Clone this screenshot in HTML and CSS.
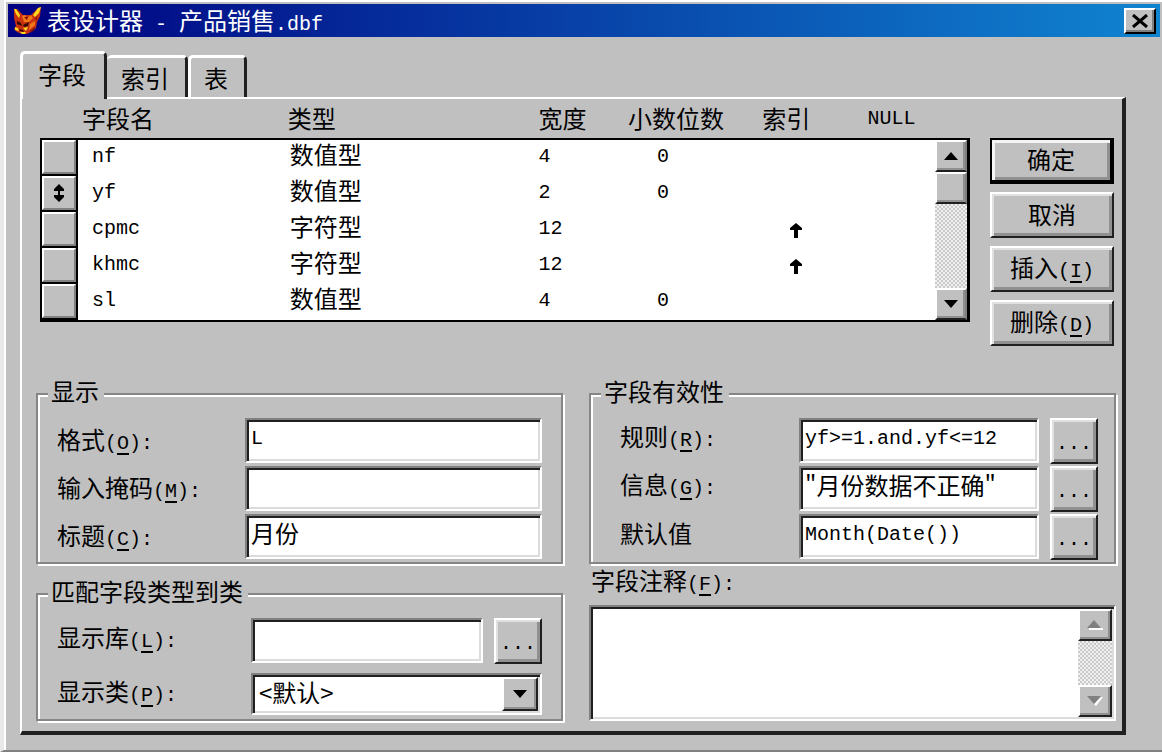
FILE: index.html
```html
<!DOCTYPE html>
<html lang="zh-CN">
<head>
  <meta charset="UTF-8" />
  <meta name="viewport" content="width=device-width, initial-scale=1" />
  <title>表设计器 - 产品销售.dbf</title>
  <link rel="stylesheet" href="styles.css">
</head>
<body>
  <div class="window">
    <header class="title-bar">
      <svg class="fox" viewBox="0 0 28 28" aria-hidden="true">
        <path fill="#c83010" d="M1 2l3 0 6 6h8l7-7 3-1-1 9-3 6-1 6-5 4-4 2h-5l-5-2-3-3 2-3-1-4-1-4z" />
        <path fill="#ffd820" d="M1 2h2l4 6-1 3-3-4zM28 0l-3 1-5 7 2 2 4-4z" />
        <path fill="#f07818" d="M9 9l3-1 2 3 4-3 2 3-4 4h-5zM17 17l5-3 0 4-6 5z" />
        <path fill="#300808" d="M4 14l4 2 1 3-5-2zM10 18l6-3-1 4-4 1zM6 22l4 1 1 2-4-1z" />
        <path fill="#ffd820" d="M2 20l3 1 1 3-4-1zM10 21l5-1-2 4zM7 25h6l-1 2H9z" />
        <path fill="#801008" d="M11 10l3 3 1-3zM22 12l2-3 0 4zM16 25l6-5-1 4z" />
      </svg>
      <h1>表设计器<span class="en"> - </span>产品销售<span class="en">.dbf</span></h1>
      <button class="close" aria-label="关闭">
        <svg viewBox="0 0 18 14"><path d="M2 1l14 12M16 1L2 13" stroke="#000" stroke-width="3" /></svg>
      </button>
    </header>

    <nav class="tabs">
      <button class="tab active">字段</button>
      <button class="tab">索引</button>
      <button class="tab">表</button>
    </nav>

    <main class="panel">
      <div class="top">
        <div class="list">
          <table>
            <colgroup>
              <col class="c-handle"><col class="c-name"><col class="c-type"><col class="c-width"><col class="c-dec"><col class="c-index"><col>
            </colgroup>
            <thead>
              <tr><td></td><th>字段名</th><th>类型</th><th>宽度</th><th>小数位数</th><th>索引</th><th class="en">NULL</th></tr>
            </thead>
            <tbody>
              <tr>
                <td class="handle"><button aria-label="nf"></button></td>
                <td class="name en">nf</td><td class="type">数值型</td><td class="num en">4</td><td class="dec en">0</td><td class="index"></td><td></td>
              </tr>
              <tr>
                <td class="handle"><button aria-label="yf"><svg class="updown" viewBox="0 0 12 18"><path d="M6 0l5 5v2H7v4h4v2l-5 5-5-5v-2h4V7H1V5z" /></svg></button></td>
                <td class="name en">yf</td><td class="type">数值型</td><td class="num en">2</td><td class="dec en">0</td><td class="index"></td><td></td>
              </tr>
              <tr>
                <td class="handle"><button aria-label="cpmc"></button></td>
                <td class="name en">cpmc</td><td class="type">字符型</td><td class="num en">12</td><td class="dec en"></td>
                <td class="index"><svg class="up" viewBox="0 0 14 16"><path d="M7 0l6 5v2H9v8H5V7H1V5z" /></svg></td><td></td>
              </tr>
              <tr>
                <td class="handle"><button aria-label="khmc"></button></td>
                <td class="name en">khmc</td><td class="type">字符型</td><td class="num en">12</td><td class="dec en"></td>
                <td class="index"><svg class="up" viewBox="0 0 14 16"><path d="M7 0l6 5v2H9v8H5V7H1V5z" /></svg></td><td></td>
              </tr>
              <tr>
                <td class="handle"><button aria-label="sl"></button></td>
                <td class="name en">sl</td><td class="type">数值型</td><td class="num en">4</td><td class="dec en">0</td><td class="index"></td><td></td>
              </tr>
            </tbody>
          </table>
          <div class="scrollbar list-scroll">
            <button aria-label="向上"><svg viewBox="0 0 14 8"><path d="M7 0l7 8H0z" /></svg></button>
            <div class="thumb"></div>
            <div class="track"></div>
            <button aria-label="向下"><svg viewBox="0 0 14 8"><path d="M0 0h14L7 8z" /></svg></button>
          </div>
        </div>

        <div class="actions">
          <button class="btn default">确定</button>
          <button class="btn">取消</button>
          <button class="btn">插入<span class="en">(<u>I</u>)</span></button>
          <button class="btn">删除<span class="en">(<u>D</u>)</span></button>
        </div>
      </div>

      <div class="bottom">
        <div class="column">
          <fieldset class="display">
            <legend>显示</legend>
            <div class="row">
              <label for="format">格式<span class="en">(<u>O</u>):</span></label>
              <input type="text" id="format" class="en" value="L" />
            </div>
            <div class="row">
              <label for="mask">输入掩码<span class="en">(<u>M</u>):</span></label>
              <input type="text" id="mask" />
            </div>
            <div class="row">
              <label for="caption">标题<span class="en">(<u>C</u>):</span></label>
              <input type="text" id="caption" value="月份" />
            </div>
          </fieldset>

          <fieldset class="match">
            <legend>匹配字段类型到类</legend>
            <div class="row">
              <label for="lib">显示库<span class="en">(<u>L</u>):</span></label>
              <input type="text" id="lib" />
              <button class="btn dots en" aria-label="浏览">...</button>
            </div>
            <div class="row">
              <label for="cls">显示类<span class="en">(<u>P</u>):</span></label>
              <div class="combo">
                <select id="cls"><option>&lt;默认&gt;</option></select>
                <span class="arrow"><svg viewBox="0 0 14 8"><path d="M0 0h14L7 8z" /></svg></span>
              </div>
            </div>
          </fieldset>
        </div>

        <div class="column">
          <fieldset class="valid">
            <legend>字段有效性</legend>
            <div class="row">
              <label for="rule">规则<span class="en">(<u>R</u>):</span></label>
              <input type="text" id="rule" class="en" value="yf&gt;=1.and.yf&lt;=12" />
              <button class="btn dots en" aria-label="规则">...</button>
            </div>
            <div class="row">
              <label for="msg">信息<span class="en">(<u>G</u>):</span></label>
              <input type="text" id="msg" value="&quot;月份数据不正确&quot;" />
              <button class="btn dots en" aria-label="信息">...</button>
            </div>
            <div class="row">
              <label for="def">默认值</label>
              <input type="text" id="def" class="en" value="Month(Date())" />
              <button class="btn dots en" aria-label="默认值">...</button>
            </div>
          </fieldset>

          <label class="note-label" for="note">字段注释<span class="en">(<u>F</u>):</span></label>
          <div class="note">
            <textarea id="note"></textarea>
            <div class="scrollbar">
              <button aria-label="向上" disabled><svg viewBox="0 0 16 10"><path class="lit" d="M2 8h14v2H2z" /><path d="M7 0l7 8H0z" /></svg></button>
              <div class="track"></div>
              <button aria-label="向下" disabled><svg viewBox="0 0 16 10"><path class="lit" d="M14 1h2L9 10 7 8z" /><path d="M0 0h14L7 8z" /></svg></button>
            </div>
          </div>
        </div>
      </div>
    </main>
  </div>
</body>
</html>
```
FILE: styles.css
```css
* {
  box-sizing: border-box;
}
body {
  margin: 0;
  background-color: #e4e4e4;
  font-family: 'Noto Sans CJK SC', sans-serif;
  font-size: 24px;
  line-height: 24px;
  color: #000;
}
button, input, select, textarea {
  font: inherit;
  color: inherit;
  margin: 0;
  padding: 0;
  border-radius: 0;
}
.en {
  font-family: 'Liberation Mono', 'Noto Sans CJK SC', monospace;
  font-size: 20px;
  white-space: pre;
}
span.en {
  line-height: 16px;
}
u {
  text-underline-offset: 4px;
  text-decoration-thickness: 2px;
}
.window {
  display: flex;
  flex-direction: column;
  min-height: 100vh;
  padding: 4px 2px 0 4px;
  border-left: 4px solid #e8e8e8;
  border-bottom: 2px solid #808080;
  background-color: #c0c0c0;
  box-shadow: inset 2px 2px 0 #fff;
}

/* title bar */
.title-bar {
  display: flex;
  align-items: center;
  height: 33px;
  padding: 0 4px 0 5px;
  background: linear-gradient(to right, #000080, #1084d0);
}
.fox {
  width: 28px;
  height: 28px;
  margin-right: 6px;
}
h1 {
  flex: 1;
  margin: 0;
  font-size: 24px;
  font-weight: normal;
  color: #fff;
}
.close {
  display: flex;
  align-items: center;
  justify-content: center;
  width: 32px;
  height: 26px;
  border: 2px solid;
  border-color: #fff #000 #000 #fff;
  background-color: #c0c0c0;
  box-shadow: inset -2px -2px 0 #808080;
}
.close svg {
  width: 18px;
  height: 14px;
}

/* tabs */
.tabs {
  display: flex;
  align-items: flex-end;
  padding: 14px 0 0 12px;
}
.tab {
  height: 42px;
  padding: 0 16px 0 14px;
  border: solid;
  border-width: 3px 3px 0 0;
  border-color: #fff #202020 #c0c0c0 #fff;
  border-radius: 5px 5px 0 0;
  background-color: #c0c0c0;
}
.tab:last-child {
  padding: 0 16px 0 13px;
  border-left-width: 3px;
}
.tab.active {
  position: relative;
  height: 48px;
  margin-bottom: -2px;
  padding: 0 18px 5px 15px;
  border-left-width: 3px;
}
.panel {
  flex: 1;
  margin: 0 34px 15px 12px;
  padding: 0 6px 10px 18px;
  border: solid;
  border-width: 2px 4px 4px 2px;
  border-color: #fff #202020 #202020 #fff;
}

/* field list */
.top {
  display: flex;
  align-items: flex-start;
  gap: 20px;
  padding-right: 2px;
}
.list {
  display: flex;
  flex: 1;
}
table {
  flex: 1;
  table-layout: fixed;
  border-collapse: separate;
  border-spacing: 0;
}
.c-handle { width: 38px; }
.c-name { width: 23%; }
.c-type { width: 28%; }
.c-width { width: 10%; }
.c-dec { width: 15%; }
.c-index { width: 12%; }
th, td {
  padding: 0 0 0 4px;
  text-align: left;
  font-weight: normal;
}
thead tr {
  height: 39px;
}
th {
  padding-bottom: 2px;
}
th.en {
  padding: 0 0 0 2px;
}
tbody td {
  height: 36px;
  padding-bottom: 2px;
  background-color: #fff;
}
tbody tr:first-child td {
  height: 38px;
  border-top: 2px solid #000;
}
tbody tr:last-child td {
  height: 38px;
  border-bottom: 2px solid #000;
}
tbody td.handle {
  padding: 0;
  border-left: 2px solid #000;
  border-right: 2px solid #000;
  background-color: #000;
}
.handle button {
  display: flex;
  align-items: center;
  justify-content: center;
  width: 34px;
  height: 34px;
  margin-bottom: 2px;
  border: 2px solid;
  border-color: #fff #808080 #808080 #fff;
  background-color: #c0c0c0;
}
.updown {
  width: 12px;
  height: 18px;
}
td.name { padding-left: 14px; }
td.type { padding: 0 0 8px 6px; }
td.dec { padding-left: 33px; }
td.index {
  padding: 2px 0 0 31px;
}
.up {
  display: block;
  width: 14px;
  height: 16px;
}

/* scroll bars */
.scrollbar {
  display: flex;
  flex-direction: column;
  width: 34px;
}
.list-scroll {
  width: 35px;
  margin-top: 39px;
  border: solid #000;
  border-width: 2px 3px 2px 0;
}
.scrollbar button, .thumb, .arrow {
  display: flex;
  align-items: center;
  justify-content: center;
  height: 32px;
  border: 2px solid;
  border-color: #fff #202020 #202020 #fff;
  background-color: #c0c0c0;
  box-shadow: inset -2px -2px 0 #909090;
}
.list-scroll button, .thumb {
  border-right-color: #808080;
}
.scrollbar svg, .arrow svg {
  width: 14px;
  height: 8px;
}
.scrollbar button:disabled svg {
  width: 16px;
  height: 10px;
  fill: #808080;
}
.scrollbar .lit {
  fill: #fff;
}
.track {
  flex: 1;
  background: repeating-conic-gradient(#cacaca 0 25%, #f0f0f0 0 50%) 0 0 / 4px 4px;
}

/* buttons */
.actions {
  display: flex;
  flex-direction: column;
  gap: 8px;
  width: 124px;
  margin-top: 39px;
}
.btn {
  height: 46px;
  padding-bottom: 3px;
  border: 2px solid;
  border-color: #fff #202020 #202020 #fff;
  background-color: #c0c0c0;
  box-shadow: inset 2px 2px 0 #e0e0e0, inset -3px -3px 0 #909090;
}
.btn.default {
  border: solid #000;
  border-width: 2px 4px 4px 2px;
  box-shadow: inset 3px 3px 0 #f4f4f4, inset -3px -3px 0 #909090;
}
.btn.dots {
  width: 48px;
  height: 46px;
  padding: 6px 0 0;
}

/* lower part */
.bottom {
  display: grid;
  grid-template-columns: 1fr 1fr;
  gap: 26px;
  margin: 34px 0 0 -4px;
}
.column {
  display: flex;
  flex-direction: column;
  min-width: 0;
}
fieldset {
  min-width: 0;
  margin: 0;
  padding: 8px 19px 3px;
  border: 2px solid #868686;
  box-shadow: 2px 2px 0 #fff, inset 2px 2px 0 #fff;
}
legend {
  margin-left: -9px;
  padding: 0 5px 6px 3px;
  line-height: 22px;
  margin-bottom: 2px;
  background-color: #c0c0c0;
}
.row {
  display: flex;
  align-items: center;
  height: 45px;
}
.row + .row {
  margin-top: 3px;
}
.row label {
  flex: none;
  width: 188px;
  padding-bottom: 2px;
}
input, .combo, .note {
  border: 2px solid;
  border-color: #808080 #fff #fff #808080;
  background-color: #fff;
  box-shadow: inset 2px 2px 0 #202020, inset -2px -2px 0 #dcdcdc;
}
input {
  flex: 1;
  min-width: 0;
  height: 45px;
  padding: 0 4px 8px;
}
input.en {
  padding-bottom: 5px;
}
.match {
  margin-top: 16px;
  padding-bottom: 4px;
}
.match .row label {
  width: 194px;
  padding-bottom: 6px;
}
.match .row + .row {
  height: 42px;
  margin-top: 10px;
}
.dots {
  margin-left: 11px;
}
.combo {
  position: relative;
  flex: 1;
  height: 42px;
  padding: 2px;
}
.combo select {
  width: 100%;
  height: 34px;
  padding: 0 36px 4px 4px;
  border: none;
  background: none;
  appearance: none;
}
.arrow {
  position: absolute;
  top: 2px;
  right: 2px;
  width: 36px;
  height: 34px;
  pointer-events: none;
}
.valid {
  padding-left: 29px;
  padding-right: 16px;
}
.valid legend {
  margin-left: -19px;
}
.valid .row label {
  width: 179px;
  padding-bottom: 8px;
}
.note-label {
  margin: 4px 0 12px 2px;
}
.note {
  display: flex;
  flex: 1;
  padding: 2px;
}
textarea {
  flex: 1;
  min-width: 0;
  height: 100%;
  border: none;
  background: none;
  resize: none;
}
```
